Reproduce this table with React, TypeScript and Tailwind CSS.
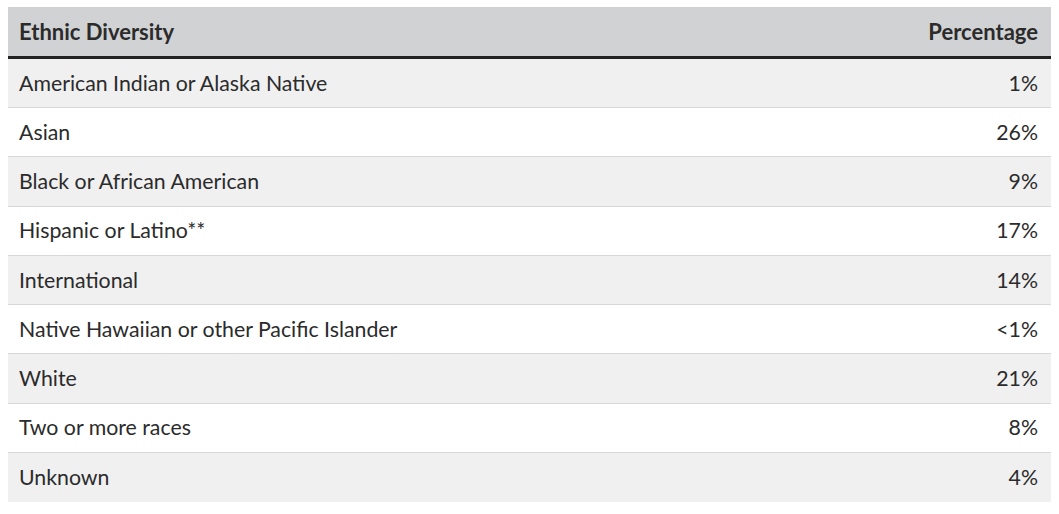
import React from "react";

const rows: [string, string][] = [
  ["American Indian or Alaska Native", "1%"],
  ["Asian", "26%"],
  ["Black or African American", "9%"],
  ["Hispanic or Latino**", "17%"],
  ["International", "14%"],
  ["Native Hawaiian or other Pacific Islander", "<1%"],
  ["White", "21%"],
  ["Two or more races", "8%"],
  ["Unknown", "4%"],
];

export default function App() {
  return (
    <div className="bg-white w-[1059px] h-[514px] pt-[7px] pl-[8px]" style={{ fontFamily: "Lato, 'Noto Sans', sans-serif" }}>
      <div className="w-[1043px]">
        <div className="flex items-center justify-between h-[52px] bg-[#d1d2d4] border-b-[3px] border-[#222] px-[11px] text-[22px] font-bold text-[#2b2b2b]">
          <span>Ethnic Diversity</span>
          <span className="pr-[2px]">Percentage</span>
        </div>
        {rows.map(([label, pct], i) => (
          <div
            key={label}
            className={`flex items-center justify-between h-[49.22px] px-[11px] pt-[1px] text-[21.3px] text-[#2b2b2b] ${i % 2 === 0 ? "bg-[#f0f0f0]" : "bg-white"} ${i < rows.length - 1 ? "border-b border-[#d8d8d8]" : ""}`}
          >
            <span>{label}</span>
            <span className="pr-[2px]">{pct}</span>
          </div>
        ))}
      </div>
    </div>
  );
}
